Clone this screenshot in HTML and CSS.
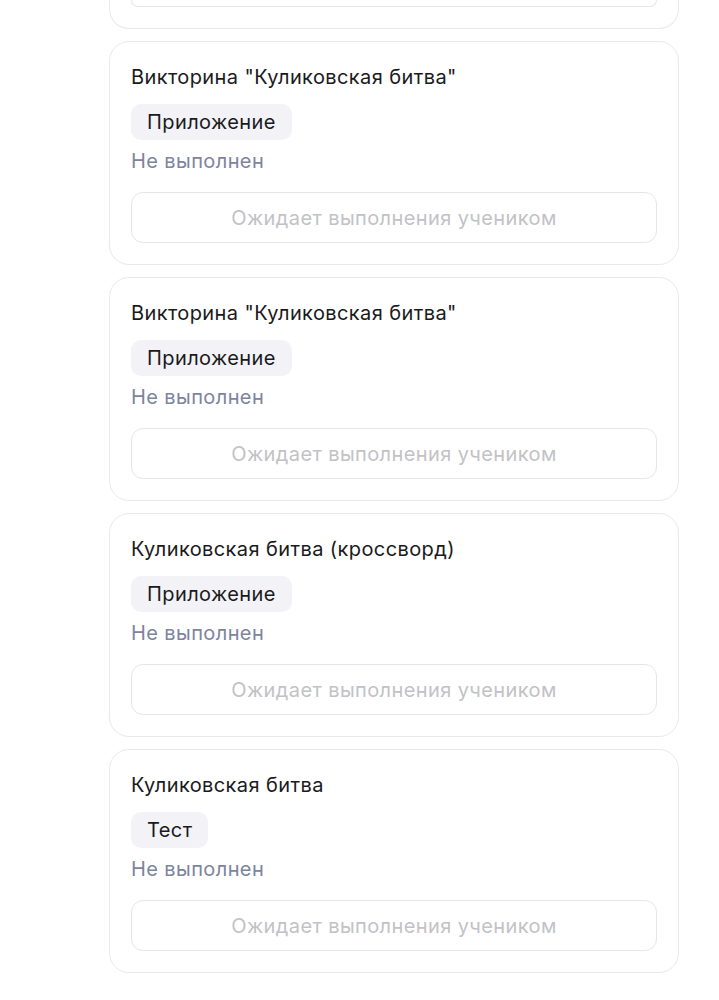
FILE: index.html
```html
<!doctype html>
<html>
<head>
<meta charset="utf-8">
<title>Задания</title>
<link rel="stylesheet" href="styles.css">
</head>
<body>
	<div class="page">
		<div class="task-list">
			<!-- хвост предыдущей карточки, прокручен за верх экрана -->
			<div class="task-tail"><div class="task-tail-btn"></div></div>
			<div class="task">
				<div class="task-title">Викторина "Куликовская битва"</div>
				<span class="task-tag">Приложение</span>
				<div class="task-status">Не выполнен</div>
				<button class="task-btn" disabled>Ожидает выполнения учеником</button>
			</div>
			<div class="task">
				<div class="task-title">Викторина "Куликовская битва"</div>
				<span class="task-tag">Приложение</span>
				<div class="task-status">Не выполнен</div>
				<button class="task-btn" disabled>Ожидает выполнения учеником</button>
			</div>
			<div class="task">
				<div class="task-title">Куликовская битва (кроссворд)</div>
				<span class="task-tag">Приложение</span>
				<div class="task-status">Не выполнен</div>
				<button class="task-btn" disabled>Ожидает выполнения учеником</button>
			</div>
			<div class="task">
				<div class="task-title">Куликовская битва</div>
				<span class="task-tag">Тест</span>
				<div class="task-status">Не выполнен</div>
				<button class="task-btn" disabled>Ожидает выполнения учеником</button>
			</div>
		</div>
	</div>
</body>
</html>
```
FILE: styles.css
```css
*{ margin:0; padding:0; box-sizing:border-box;}
body{
	background:#fff;
	font-family:Inter, "Noto Sans", sans-serif;
	color:#1a1a1c;
	letter-spacing:0.4px;
	overflow:hidden;
}
.page{
	padding-left:109px;
	width:679px;
}
.task-list{
	display:flex;
	flex-direction:column;
	gap:12px;
}
.task-tail{
	height:29px;
	padding:0 21px;
	border:1px solid #e9e9ec;
	border-top:none;
	border-radius:0 0 20px 20px;
}
.task-tail-btn{
	height:7px;
	border:1px solid #e6e6ea;
	border-top:none;
	border-radius:0 0 12px 12px;
}
.task{
	display:flex;
	flex-direction:column;
	align-items:flex-start;
	height:224px;
	padding:21px 21px 0;
	border:1px solid #e9e9ec;
	border-radius:20px;
}
.task-title{
	font-size:20px;
	line-height:28px;
}
.task-tag{
	margin-top:13px;
	padding:0 16px;
	height:36px;
	line-height:36px;
	font-size:20px;
	background:#f2f2f7;
	border-radius:10px;
}
.task-status{
	margin-top:7px;
	font-size:20px;
	line-height:28px;
	color:#7d84a0;
}
.task-btn{
	margin-top:17px;
	width:100%;
	height:51px;
	font:inherit;
	font-size:20px;
	letter-spacing:0.4px;
	color:#c2c2c6;
	background:#fff;
	border:1px solid #e6e6ea;
	border-radius:12px;
}
```
